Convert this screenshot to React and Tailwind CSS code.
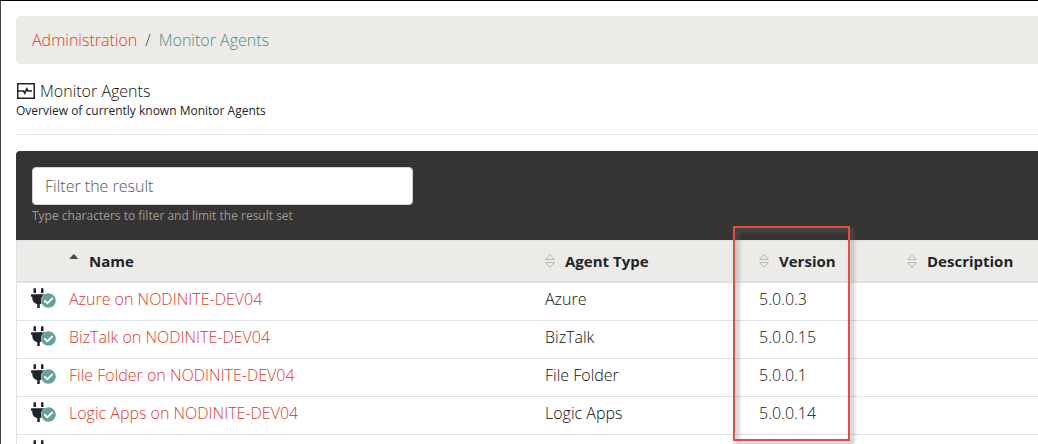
import { FaPlug, FaCheckCircle } from "react-icons/fa";

const agents = [
  { name: "Azure on NODINITE-DEV04", type: "Azure", version: "5.0.0.3" },
  { name: "BizTalk on NODINITE-DEV04", type: "BizTalk", version: "5.0.0.15" },
  { name: "File Folder on NODINITE-DEV04", type: "File Folder", version: "5.0.0.1" },
  { name: "Logic Apps on NODINITE-DEV04", type: "Logic Apps", version: "5.0.0.14" },
];

function MonitorIcon() {
  return (
    <svg width="20" height="18" viewBox="0 0 20 18" fill="none" stroke="#212529" aria-hidden="true">
      <rect x="1.75" y="1.75" width="16.5" height="14.5" strokeWidth="1.5" />
      <path d="M2 9h5.6l1.2 2.2 2-4.4 1.2 2.2H16" strokeWidth="1.7" />
    </svg>
  );
}

function SortIcon({ active }) {
  return active ? (
    <svg width="10" height="16" viewBox="0 0 10 16" aria-hidden="true">
      <path d="M0.3 6 4.4 1.3h0.8L9.3 6z" fill="#4b4b4b" />
    </svg>
  ) : (
    <svg width="10" height="16" viewBox="0 0 10 16" fill="none" stroke="#b9b8b6" aria-hidden="true">
      <path d="M0.6 6.5 5 1.7l4.4 4.8zM0.6 9.5h8.8L5 14.3z" />
    </svg>
  );
}

function HeaderCell({ label, active, children }) {
  return (
    <th
      scope="col"
      aria-sort={active ? "ascending" : "none"}
      className="relative border-y border-b-2 border-[#dee2e6] px-3 py-2 text-left text-[15px] font-bold text-[#212529]"
    >
      <button type="button" className="flex items-center gap-2.5 leading-6">
        <SortIcon active={active} />
        {label}
      </button>
      {children}
    </th>
  );
}

function StatusIcon() {
  return (
    <span className="flex items-end text-[#212529]">
      <FaPlug className="h-5 w-[15px]" aria-hidden="true" />
      <span className="-ml-[5px] rounded-full bg-white text-[#68a09b]">
        <FaCheckCircle className="size-[15px]" aria-hidden="true" />
      </span>
    </span>
  );
}

export default function App() {
  return (
    <div className="h-screen overflow-hidden border-t border-l border-t-black border-l-[#444444] bg-white pt-[15px] pl-[15px] font-['Open_Sans','Noto_Sans',sans-serif] text-base leading-6 font-light text-[#0c0f12]">
      <nav aria-label="Breadcrumb" className="rounded-l bg-[#edebe7] px-4 py-3">
        <ol className="flex gap-2">
          <li><a href="#administration" className="text-[#dd3a30]">Administration</a></li>
          <li aria-hidden="true" className="text-[#3c444b]">/</li>
          <li aria-current="page" className="text-[#4a8c86]">Monitor Agents</li>
        </ol>
      </nav>

      <header className="mt-4">
        <h1 className="flex h-[22px] items-center gap-1">
          <MonitorIcon />
          Monitor Agents
        </h1>
        <p className="text-xs leading-[18px] font-normal text-[#212529]">Overview of currently known Monitor Agents</p>
      </header>
      <hr className="mt-3.5 mb-4 border-[#e3e3e3]" />

      <section className="rounded-tl bg-[#363432] p-4">
        <input
          id="filter"
          type="text"
          aria-label="Filter the result"
          aria-describedby="filter-help"
          placeholder="Filter the result"
          className="block h-[38px] w-[381px] max-w-full rounded border border-[#ced4da] bg-white px-3 placeholder:text-[#4f585f]"
        />
        <p id="filter-help" className="mt-[3px] text-xs leading-4 font-normal text-[#9b9a99]">
          Type characters to filter and limit the result set
        </p>
      </section>

      <table className="w-full table-fixed border-separate border-spacing-0 border-l border-[#dee2e6]">
        <colgroup>
          <col className="w-10" />
          <col className="w-[476px]" />
          <col className="w-[214px]" />
          <col className="w-[148px]" />
          <col />
        </colgroup>
        <thead className="bg-[#edebe7]">
          <tr>
            <td className="border-y border-b-2 border-[#dee2e6]" />
            <HeaderCell label="Name" active />
            <HeaderCell label="Agent Type" />
            <HeaderCell label="Version">
              <span className="pointer-events-none absolute -top-[15px] -left-3.5 h-[215px] w-[117px] border-2 border-[#df4f45] drop-shadow-[3px_3px_2px_rgba(110,110,110,0.75)]" />
            </HeaderCell>
            <HeaderCell label="Description" />
          </tr>
        </thead>
        <tbody>
          {agents.map((agent) => (
            <tr key={agent.name} className="h-[38px]">
              <td className="border-b border-[#dee2e6] pb-2 pl-3.5"><StatusIcon /></td>
              <td className="border-b border-[#dee2e6] px-3 pb-1.5">
                <a href="#agent" className="text-[#dd3a30]">{agent.name}</a>
              </td>
              <td className="border-b border-[#dee2e6] px-3 pb-1.5">{agent.type}</td>
              <td className="border-b border-[#dee2e6] px-3 pb-1.5">{agent.version}</td>
              <td className="border-b border-[#dee2e6]" />
            </tr>
          ))}
          <tr className="h-[38px]">
            <td className="pb-2 pl-3.5"><StatusIcon /></td>
            <td colSpan={4} />
          </tr>
        </tbody>
      </table>
    </div>
  );
}
